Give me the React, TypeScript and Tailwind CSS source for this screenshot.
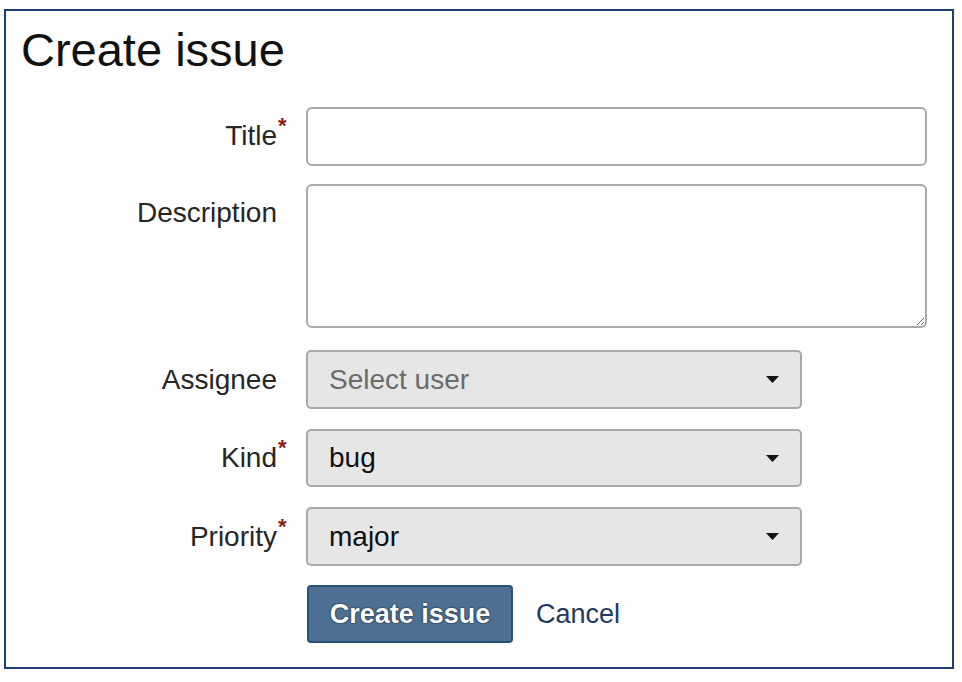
import React from 'react'

const Caret: React.FC = () => (
  <svg width="13" height="7" viewBox="0 0 13 7" className="mr-[21px] shrink-0">
    <path d="M0 0 L13 0 L6.5 7 Z" fill="#111" />
  </svg>
)

const Label: React.FC<{ text: string; required?: boolean; h: string }> = ({ text, required, h }) => (
  <div className={`w-[271px] shrink-0 flex items-center justify-end ${h}`}>
    <span className="relative text-[28px] text-[#262626] leading-none">
      {text}
      {required && (
        <span className="absolute left-full -top-[7px] ml-[1px] text-[22px] font-bold text-[#8b1a1a]">*</span>
      )}
    </span>
  </div>
)

const SelectBox: React.FC<{ value: string; placeholder?: boolean; h: string }> = ({ value, placeholder, h }) => (
  <div
    className={`w-[496px] ${h} flex items-center justify-between bg-[#e6e6e6] border-2 border-[#a9a9a9] rounded-[5px] pl-[21px]`}
  >
    <span className={`text-[28px] leading-none ${placeholder ? 'text-[#6b6b6b]' : 'text-[#111]'}`}>{value}</span>
    <Caret />
  </div>
)

const App: React.FC = () => {
  return (
    <div className="w-[962px] h-[682px] bg-white pt-[9px] pl-[4px] font-['Liberation_Sans',Arial,sans-serif]">
      <div className="w-[950px] h-[660px] border-2 border-[#1c3f7c] pt-[16px] pl-[15px]">
        {/* Heading */}
        <h1 className="text-[47px] leading-[46px] text-[#111]">Create issue</h1>

        <div className="mt-[34px] flex flex-col -ml-[15px]">
          {/* Title */}
          <div className="flex gap-[29px]">
            <Label text="Title" required h="h-[57px]" />
            <div className="w-[621px] h-[59px] border-2 border-[#a9a9a9] rounded-[6px] bg-white" />
          </div>

          {/* Description */}
          <div className="flex gap-[29px] mt-[18px]">
            <Label text="Description" h="h-[58px]" />
            <textarea className="w-[621px] h-[144px] border-2 border-[#a9a9a9] rounded-[6px] bg-white resize-y outline-none" />
          </div>

          {/* Assignee */}
          <div className="flex gap-[29px] mt-[22px]">
            <Label text="Assignee" h="h-[59px]" />
            <SelectBox value="Select user" placeholder h="h-[59px]" />
          </div>

          {/* Kind */}
          <div className="flex gap-[29px] mt-[20px]">
            <Label text="Kind" required h="h-[58px]" />
            <SelectBox value="bug" h="h-[58px]" />
          </div>

          {/* Priority */}
          <div className="flex gap-[29px] mt-[20px]">
            <Label text="Priority" required h="h-[59px]" />
            <SelectBox value="major" h="h-[59px]" />
          </div>

          {/* Actions */}
          <div className="flex items-center mt-[19px] pl-[301px]">
            <button className="w-[206px] h-[58px] bg-[#4e7092] border-2 border-[#2d5076] rounded-[4px] text-white font-bold text-[27px] leading-none [text-shadow:0_0_2px_#10223a,0_0_1px_#10223a]">
              Create issue
            </button>
            <span className="ml-[23px] text-[27px] leading-none text-[#1f3a60]">Cancel</span>
          </div>
        </div>
      </div>
    </div>
  )
}

export default App
